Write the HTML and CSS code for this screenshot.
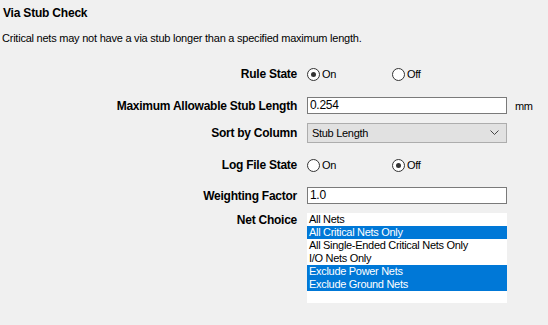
FILE: index.html
```html
<!DOCTYPE html>
<html>
<head>
<meta charset="utf-8">
<link rel="stylesheet" href="styles.css">
</head>
<body>
<div class="page">
  <div class="title">Via Stub Check</div>
  <div class="desc">Critical nets may not have a via stub longer than a specified maximum length.</div>
  <div class="form">
    <div class="row r1">
      <div class="label">Rule State</div>
      <div class="ctrl radios">
        <span class="opt"><span class="radio checked"></span>On</span>
        <span class="opt"><span class="radio"></span>Off</span>
      </div>
    </div>
    <div class="row r2">
      <div class="label">Maximum Allowable Stub Length</div>
      <div class="ctrl"><div class="input">0.254</div></div>
      <div class="unit">mm</div>
    </div>
    <div class="row r3">
      <div class="label">Sort by Column</div>
      <div class="ctrl"><div class="select"><span>Stub Length</span>
        <svg class="chev" width="9" height="6" viewBox="0 0 9 6"><path d="M0.5 0.5 L4.5 4.5 L8.5 0.5" fill="none" stroke="#444" stroke-width="1"/></svg>
      </div></div>
    </div>
    <div class="row r4">
      <div class="label">Log File State</div>
      <div class="ctrl radios">
        <span class="opt"><span class="radio"></span>On</span>
        <span class="opt"><span class="radio checked"></span>Off</span>
      </div>
    </div>
    <div class="row r5">
      <div class="label">Weighting Factor</div>
      <div class="ctrl"><div class="input">1.0</div></div>
    </div>
    <div class="row r6">
      <div class="label top">Net Choice</div>
      <div class="ctrl">
        <div class="list">
          <div class="item">All Nets</div>
          <div class="item sel">All Critical Nets Only</div>
          <div class="item">All Single-Ended Critical Nets Only</div>
          <div class="item">I/O Nets Only</div>
          <div class="item sel">Exclude Power Nets</div>
          <div class="item sel">Exclude Ground Nets</div>
        </div>
      </div>
    </div>
  </div>
</div>
</body>
</html>
```

FILE: styles.css
```css
html, body {
  margin: 0;
  padding: 0;
  background: #f0f0f0;
}
body {
  font-family: "Liberation Sans", Arial, sans-serif;
  font-size: 11px;
  color: #000;
  width: 548px;
  height: 325px;
  overflow: hidden;
}
.title {
  font-weight: bold;
  font-size: 12px;
  line-height: 14px;
  padding: 6px 0 0 3px;
  letter-spacing: -0.2px;
}
.desc {
  line-height: 14px;
  padding: 11px 0 0 2px;
  letter-spacing: -0.23px;
}
.form {
  padding-top: 20px;
}
.row {
  display: flex;
  align-items: center;
}
.label {
  width: 297px;
  text-align: right;
  font-weight: bold;
  font-size: 12px;
  letter-spacing: -0.25px;
  flex: none;
}
.label.top {
  align-self: flex-start;
  line-height: 14px;
}
.ctrl {
  margin-left: 10px;
  width: 200px;
  flex: none;
}
.unit {
  margin-left: 8px;
  letter-spacing: -0.3px;
}
.r1 { height: 18px; }
.r2 { height: 17px; margin-top: 14px; }
.r3 { height: 20px; margin-top: 9px; }
.r4 { height: 18px; margin-top: 13px; }
.r5 { height: 17px; margin-top: 13px; }
.r6 { height: 90px; margin-top: 9px; align-items: flex-start; }
.radios {
  display: flex;
  align-items: center;
}
.opt {
  display: flex;
  align-items: center;
  width: 85px;
  letter-spacing: -0.3px;
}
.radio {
  width: 11px;
  height: 11px;
  border: 1px solid #333;
  border-radius: 50%;
  background: #fff;
  margin-right: 2px;
  position: relative;
  box-sizing: content-box;
}
.radio.checked::after {
  content: "";
  position: absolute;
  left: 3px;
  top: 3px;
  width: 5px;
  height: 5px;
  border-radius: 50%;
  background: #333;
}
.input {
  height: 17px;
  box-sizing: border-box;
  border: 1px solid #7a7a7a;
  background: #fff;
  padding-left: 2px;
  line-height: 15px;
  font-size: 12px;
  letter-spacing: -0.3px;
}
.select {
  height: 20px;
  box-sizing: border-box;
  border: 1px solid #adadad;
  background: #e1e1e1;
  display: flex;
  align-items: center;
  justify-content: space-between;
  padding: 0 7px 0 4px;
  letter-spacing: -0.3px;
}
.list {
  height: 90px;
  background: #fff;
}
.item {
  height: 13px;
  line-height: 13px;
  padding-left: 2px;
  letter-spacing: -0.3px;
}
.item.sel {
  background: #0078d7;
  color: #fff;
}
```
